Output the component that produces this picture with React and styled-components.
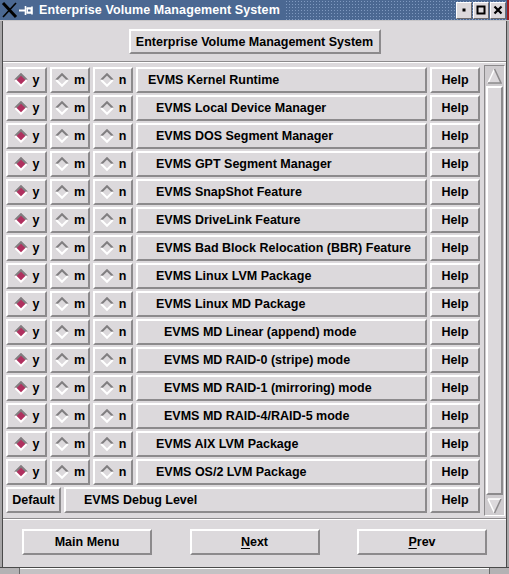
import React from "react";
import styled, { createGlobalStyle } from "styled-components";

const BG = "#dcd9dc";
const LIGHT = "#ffffff";
const DARK = "#8c8a8c";

const Global = createGlobalStyle`
  html, body { margin: 0; padding: 0; background: ${BG}; overflow: hidden; }
  * { box-sizing: border-box; }
`;

const Window = styled.div`
  width: 509px;
  height: 574px;
  display: flex;
  flex-direction: column;
  background: ${BG};
  font-family: "Liberation Sans", Arial, sans-serif;
  font-weight: bold;
  font-size: 12px;
  color: #000;
`;

const TitleBar = styled.div`
  height: 21px;
  flex: none;
  display: flex;
  align-items: center;
  background-color: #4b6892;
  background-image: radial-gradient(circle, #7f99c0 0.7px, transparent 0.9px);
  background-size: 3px 3px;
  border-bottom: 1px solid #c8c6c8;
  padding-right: 3px;
  box-shadow: inset -2px 0 #a02020;
`;

const TitleIcons = styled.div`
  display: flex;
  align-items: center;
  height: 20px;
  background: #4b6892;
  padding-left: 1px;
  padding-right: 4px;
`;

const TitleText = styled.div`
  color: #fff;
  font-size: 12.5px;
  background: #4b6892;
  padding-right: 6px;
  line-height: 20px;
  letter-spacing: 0.1px;
`;

const Spacer = styled.div`
  flex: 1;
`;

const WinButtons = styled.div`
  display: flex;
  gap: 1px;
  align-items: center;
`;

const WinButton = styled.div`
  width: 16px;
  height: 17px;
  background: ${BG};
  border: 1px solid;
  border-color: #fff #6c6a6c #6c6a6c #fff;
  display: flex;
  align-items: center;
  justify-content: center;
`;

const Frame = styled.div`
  flex: 1;
  display: flex;
  flex-direction: column;
  border-left: 2px solid #a8a6a8;
  border-right: 2px solid #a8a6a8;
`;

const Body = styled.div`
  flex: 1;
  display: flex;
  flex-direction: column;
  border-left: 1px solid #4a4a4a;
  border-right: 1px solid #4a4a4a;
`;

const HeaderArea = styled.div`
  height: 40px;
  flex: none;
  display: flex;
  justify-content: center;
  padding-top: 8px;
`;

const Bevel = styled.div`
  border: 2px solid;
  border-color: ${LIGHT} ${DARK} ${DARK} ${LIGHT};
  background: ${BG};
  display: flex;
  align-items: center;
  height: 26px;
  white-space: nowrap;
`;

const HeaderButton = styled(Bevel)`
  width: 252px;
  height: 25px;
  justify-content: center;
  font-size: 12.5px;
`;

const ListFrame = styled.div`
  display: flex;
  flex: none;
  border-top: 1px solid ${DARK};
  box-shadow: inset 0 1px ${LIGHT};
  padding: 5px 1px 5px 3px;
  border-bottom: 1px solid ${DARK};
`;

const Rows = styled.div`
  display: flex;
  flex-direction: column;
  gap: 2px;
  width: 474px;
`;

const Row = styled.div`
  display: grid;
  grid-template-columns: ${(p) => p.$cols};
  column-gap: 3px;
  height: 26px;
`;

const RadioCell = styled(Bevel)`
  justify-content: center;
  gap: 5px;
  font-size: 12.5px;
`;

const DiamondSvg = styled.svg`
  flex: none;
  width: 14px;
  height: 14px;
  display: block;
`;

const LabelCell = styled(Bevel)`
  padding-left: ${(p) => p.$indent}px;
  font-size: 12.5px;
`;

const HelpButton = styled(Bevel)`
  justify-content: center;
  font-size: 12.5px;
`;

const DefaultButton = styled(Bevel)`
  justify-content: center;
  font-size: 12.5px;
`;

const ScrollTrack = styled.div`
  width: 21px;
  margin: -2px 0 -3px 4px;
  border: 1px solid;
  border-color: ${DARK} ${LIGHT} ${LIGHT} ${DARK};
  background: #cfcccf;
  display: flex;
  flex-direction: column;
  padding: 1px;
`;

const Arrow = styled.div`
  height: 17px;
  display: flex;
  justify-content: center;
  align-items: center;
`;

const Slider = styled.div`
  flex: 1;
  margin: 2px 0;
  border: 2px solid;
  border-color: ${LIGHT} ${DARK} ${DARK} ${LIGHT};
  background: ${BG};
`;

const ButtonArea = styled.div`
  flex: 1;
  display: flex;
  justify-content: space-between;
  align-items: flex-start;
  padding: 10px 19px 0 19px;
  box-shadow: inset 0 1px ${LIGHT};
`;

const BigButton = styled(Bevel)`
  width: 130px;
  height: 26px;
  justify-content: center;
  font-size: 12.5px;
`;

const U = styled.span`
  text-decoration: underline;
  text-underline-offset: 2px;
`;

const BottomEdge = styled.div`
  height: 7px;
  flex: none;
  display: flex;
  border-top: 1px solid #4a4a4a;
  background: #c4c2c4;
`;

const Corner = styled.div`
  width: ${(p) => p.$w}px;
  background: #b4b2b4;
  border-right: ${(p) => (p.$r ? "1px solid #6a6a6a" : "none")};
  border-left: ${(p) => (p.$l ? "1px solid #6a6a6a" : "none")};
`;

const Fill = styled.div`
  flex: 1;
  box-shadow: inset 0 1px ${LIGHT};
`;

function Diamond({ on }) {
  return (
    <DiamondSvg viewBox="0 0 14 14">
      <polygon points="7,0.5 13.5,7 7,13.5 0.5,7" fill={on ? "#b0305f" : BG} />
      <polyline points="1.2,7 7,1.2 12.8,7" fill="none" stroke="#807e80" strokeWidth="2" />
      <polyline points="1.2,7 7,12.8 12.8,7" fill="none" stroke="#ffffff" strokeWidth="2" />
    </DiamondSvg>
  );
}

function Radio({ letter, on }) {
  return (
    <RadioCell>
      <Diamond on={on} />
      <span>{letter}</span>
    </RadioCell>
  );
}

const rows = [
  ["EVMS Kernel Runtime", 0],
  ["EVMS Local Device Manager", 1],
  ["EVMS DOS Segment Manager", 1],
  ["EVMS GPT Segment Manager", 1],
  ["EVMS SnapShot Feature", 1],
  ["EVMS DriveLink Feature", 1],
  ["EVMS Bad Block Relocation (BBR) Feature", 1],
  ["EVMS Linux LVM Package", 1],
  ["EVMS Linux MD Package", 1],
  ["EVMS MD Linear (append) mode", 2],
  ["EVMS MD RAID-0 (stripe) mode", 2],
  ["EVMS MD RAID-1 (mirroring) mode", 2],
  ["EVMS MD RAID-4/RAID-5 mode", 2],
  ["EVMS AIX LVM Package", 1],
  ["EVMS OS/2 LVM Package", 1],
];

export default function App() {
  return (
    <>
      <Global />
      <Window>
        <TitleBar>
          <TitleIcons>
            <svg width="17" height="18" viewBox="0 0 17 18">
              <path d="M2 2 L15 16" stroke="#000" strokeWidth="3" />
              <path d="M15 2 L2 16" stroke="#000" strokeWidth="1.6" />
            </svg>
            <svg width="17" height="17" viewBox="0 0 17 17">
              <path d="M1 8.5 H7" stroke="#fff" strokeWidth="2" />
              <path d="M7.5 4 V13" stroke="#fff" strokeWidth="1.6" />
              <path d="M8.5 6 H14 V4.5 M14 12.5 V11 H8.5 M14 6 V11" stroke="#fff" strokeWidth="1.6" fill="none" />
              <rect x="8.5" y="6" width="5.5" height="5" fill="#fff" />
              <rect x="10" y="7.5" width="2.5" height="2" fill="#4b6892" />
            </svg>
          </TitleIcons>
          <TitleText>Enterprise Volume Management System</TitleText>
          <Spacer />
          <WinButtons>
            <WinButton>
              <svg width="10" height="10" viewBox="0 0 10 10">
                <rect x="3.5" y="3.5" width="3" height="3" fill="#000" />
              </svg>
            </WinButton>
            <WinButton>
              <svg width="10" height="10" viewBox="0 0 10 10">
                <rect x="1.5" y="1.5" width="7" height="7" fill="none" stroke="#000" strokeWidth="2" />
              </svg>
            </WinButton>
            <WinButton>
              <svg width="10" height="10" viewBox="0 0 10 10">
                <path d="M1.5 1.5 L8.5 8.5 M8.5 1.5 L1.5 8.5" stroke="#000" strokeWidth="2.2" />
              </svg>
            </WinButton>
          </WinButtons>
        </TitleBar>
        <Frame>
          <Body>
            <HeaderArea>
              <HeaderButton>Enterprise Volume Management System</HeaderButton>
            </HeaderArea>
            <ListFrame>
              <Rows>
                {rows.map(([label, lvl]) => (
                  <Row key={label} $cols="41px 40px 40px 291px 50px">
                    <Radio letter="y" on />
                    <Radio letter="m" />
                    <Radio letter="n" />
                    <LabelCell $indent={10 + lvl * 8}>{label}</LabelCell>
                    <HelpButton>Help</HelpButton>
                  </Row>
                ))}
                <Row $cols="55px 363px 50px">
                  <DefaultButton>Default</DefaultButton>
                  <LabelCell $indent={18}>EVMS Debug Level</LabelCell>
                  <HelpButton>Help</HelpButton>
                </Row>
              </Rows>
              <ScrollTrack>
                <Arrow>
                  <svg width="15" height="16" viewBox="0 0 15 16">
                    <polygon points="7.5,1 14,15 1,15" fill={BG} />
                    <path d="M1 15 L7.5 1" stroke="#fff" strokeWidth="1.5" />
                    <path d="M7.5 1 L14 15 H1" stroke="#8c8a8c" strokeWidth="1.5" fill="none" />
                  </svg>
                </Arrow>
                <Slider />
                <Arrow>
                  <svg width="15" height="16" viewBox="0 0 15 16">
                    <polygon points="1,1 14,1 7.5,15" fill={BG} />
                    <path d="M1 1 H14 M1 1 L7.5 15" stroke="#fff" strokeWidth="1.5" fill="none" />
                    <path d="M14 1 L7.5 15" stroke="#8c8a8c" strokeWidth="1.5" />
                  </svg>
                </Arrow>
              </ScrollTrack>
            </ListFrame>
            <ButtonArea>
              <BigButton>Main Menu</BigButton>
              <BigButton>
                <U>N</U>ext
              </BigButton>
              <BigButton>
                <U>P</U>rev
              </BigButton>
            </ButtonArea>
          </Body>
        </Frame>
        <BottomEdge>
          <Corner $w={20} $r />
          <Fill />
          <Corner $w={20} $l />
        </BottomEdge>
      </Window>
    </>
  );
}
